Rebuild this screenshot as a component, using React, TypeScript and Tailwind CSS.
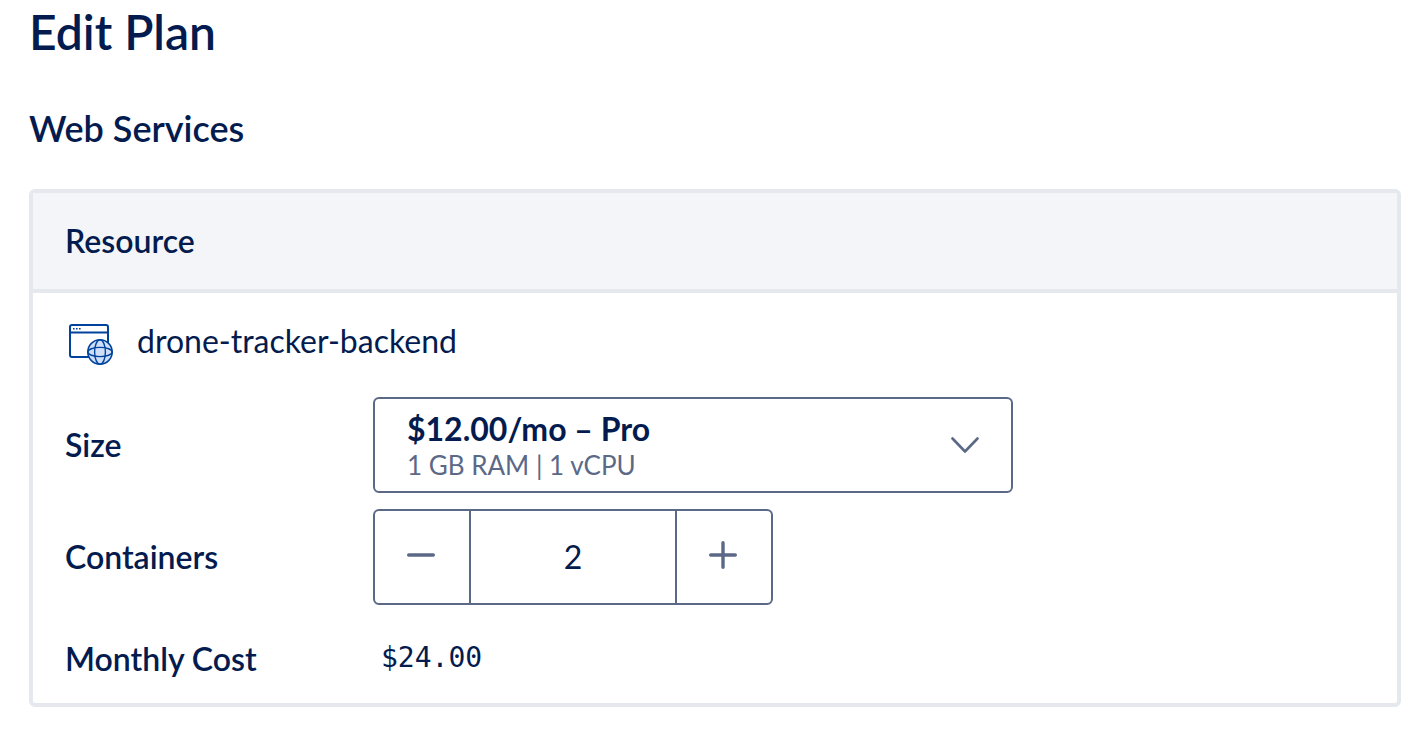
import { useState } from "react";

const plans = [
  { id: "basic", price: 5, name: "Basic", specs: "512 MB RAM | 1 vCPU" },
  { id: "pro", price: 12, name: "Pro", specs: "1 GB RAM | 1 vCPU" },
  { id: "pro-plus", price: 25, name: "Pro Plus", specs: "2 GB RAM | 1 vCPU" },
];

function ServiceIcon() {
  return (
    <svg width="48" height="48" viewBox="0 0 48 48" fill="none" stroke="#00439c" strokeWidth="2" aria-hidden="true">
      <rect x="5" y="8" width="38" height="32" rx="2" />
      <path d="M5 15.5h38" />
      <path d="M8 11.8h1.6M11 11.8h1.6M14 11.8h1.6" strokeWidth="1.4" />
      <circle cx="35" cy="35" r="12.2" fill="#cfdff9" strokeWidth="1.5" />
      <ellipse cx="35" cy="35" rx="5.4" ry="12.2" strokeWidth="1.4" />
      <ellipse cx="35" cy="35" rx="12.2" ry="4.6" strokeWidth="1.4" />
    </svg>
  );
}

export default function App() {
  const [planId, setPlanId] = useState("pro");
  const [count, setCount] = useState(2);
  const plan = plans.find((p) => p.id === planId) ?? plans[1];

  return (
    <main className="bg-white pt-[2px] pr-[19px] pb-6 pl-[29px] font-['Lato',sans-serif] text-[32px] leading-10 text-[#031b4e]">
      <h1 className="text-[48px] leading-[60px] font-semibold">Edit Plan</h1>
      <h2 className="mt-10 text-[36px] leading-[52px] font-semibold">Web Services</h2>
      <section className="mt-[35px] rounded-md border-4 border-[#e5e8ed]">
        <h3 className="border-b-4 border-[#e5e8ed] bg-[#f3f5f9] px-8 py-7 font-semibold">Resource</h3>
        <div className="px-8 py-6">
          <div className="flex h-12 items-center gap-6">
            <ServiceIcon />
            <span>drone-tracker-backend</span>
          </div>
          <div className="mt-8 grid grid-cols-[308px_1fr] items-center gap-y-4">
            <label htmlFor="size" className="font-semibold">Size</label>
            <div className="relative flex h-24 w-full max-w-[640px] items-center justify-between rounded-md border-2 border-[#5b6987] px-8">
              <div>
                <div className="leading-10 font-bold">${plan.price.toFixed(2)}/mo – {plan.name}</div>
                <div className="text-[26px] leading-8 text-[#5b6987]">{plan.specs}</div>
              </div>
              <svg width="28" height="16" viewBox="0 0 28 16" fill="none" stroke="#5b6987" strokeWidth="2.6" strokeLinecap="round" strokeLinejoin="round" aria-hidden="true">
                <path d="M1.5 1.5 14 14.5 26.5 1.5" />
              </svg>
              <select
                id="size"
                value={planId}
                onChange={(e) => setPlanId(e.target.value)}
                className="absolute inset-0 h-full w-full cursor-pointer opacity-0"
              >
                {plans.map((p) => (
                  <option key={p.id} value={p.id}>{p.name}</option>
                ))}
              </select>
            </div>

            <label htmlFor="containers" className="font-semibold">Containers</label>
            <div className="flex h-24 w-full max-w-[400px] rounded-md border-2 border-[#5b6987]">
              <button
                type="button"
                aria-label="Remove container"
                onClick={() => setCount(Math.max(1, count - 1))}
                className="flex w-24 items-center justify-center border-r-2 border-[#5b6987]"
              >
                <svg width="28" height="28" viewBox="0 0 28 28" overflow="visible" stroke="#5b6987" strokeWidth="3.4" strokeLinecap="round" aria-hidden="true">
                  <path d="M.7 12h24.6" />
                </svg>
              </button>
              <input
                id="containers"
                type="text"
                inputMode="numeric"
                value={count}
                onChange={(e) => setCount(Number(e.target.value) || 1)}
                className="min-w-0 flex-1 text-center outline-none"
              />
              <button
                type="button"
                aria-label="Add container"
                onClick={() => setCount(count + 1)}
                className="flex w-24 items-center justify-center border-l-2 border-[#5b6987]"
              >
                <svg width="28" height="28" viewBox="0 0 28 28" overflow="visible" stroke="#5b6987" strokeWidth="3.4" strokeLinecap="round" aria-hidden="true">
                  <path d="M.7 12h24.6M13-.3v24.6" />
                </svg>
              </button>
            </div>

            <div className="pt-[18px] font-semibold">Monthly Cost</div>
            <output htmlFor="size containers" className="pt-4 pl-2 font-['DejaVu_Sans_Mono',monospace] text-[28px]">
              ${(plan.price * count).toFixed(2)}
            </output>
          </div>
        </div>
      </section>
    </main>
  );
}
